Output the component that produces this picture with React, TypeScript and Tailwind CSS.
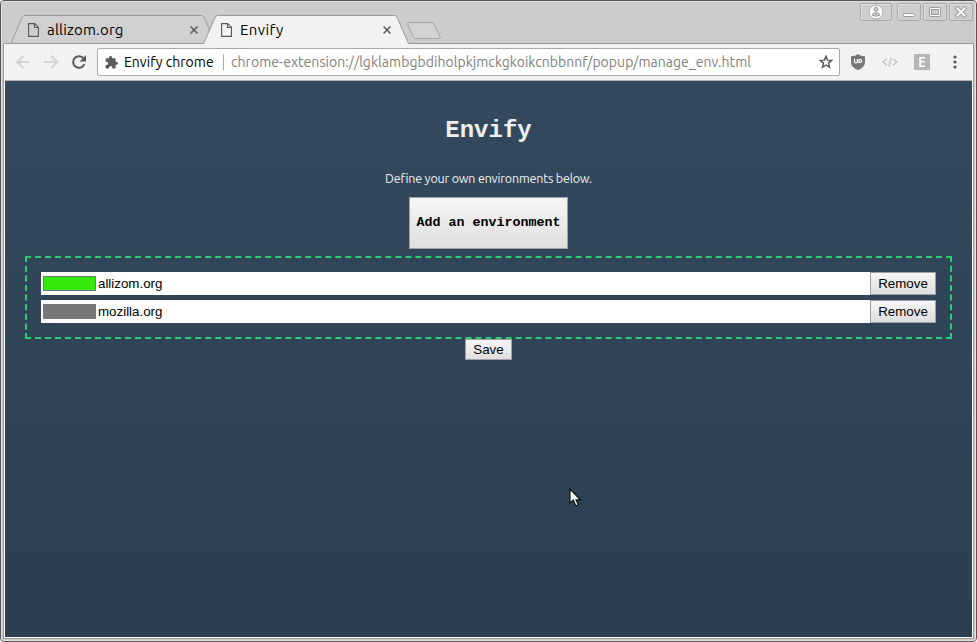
import React from "react";

const ui = "font-['Ubuntu','Noto_Sans',sans-serif]";

function PageIcon() {
  return (
    <svg width="11" height="14" viewBox="0 0 11 14" fill="none" stroke="#5a5a5a" className="shrink-0">
      <path d="M.6.6h6.1L10.4 4.3v9.1H.6zM6.5.8v3.7h3.8" strokeWidth="1.15" />
    </svg>
  );
}

function Close() {
  return (
    <svg width="8" height="8" viewBox="0 0 8 8" stroke="#5a5a5a" strokeWidth="1.5" className="shrink-0">
      <path d="M.5.5l7 7M7.5.5l-7 7" />
    </svg>
  );
}

function Tab({ title, className, titleClass }: { title: string; className: string; titleClass: string }) {
  return (
    <div className={`relative flex h-7 items-center ${className}`}>
      <PageIcon />
      <span className={`ml-2 flex-1 whitespace-nowrap text-[15px] leading-7 text-black ${titleClass}`}>{title}</span>
      <Close />
    </div>
  );
}

function TabStrip() {
  return (
    <div className="relative flex h-[42px] items-start">
      <svg className="absolute left-[-2px] top-[-2px]" width="976" height="44" viewBox="0 0 976 44" fill="none">
        <path d="M4 43.5H11L22.2 17.2Q23 15.5 25 15.5H201.5Q203.3 15.5 204 17.2L215.5 43.5" fill="#d0d0d0" stroke="#999" />
        <path d="M203.5 44L215.2 17.2Q216 15.5 218 15.5H394.5Q396.3 15.5 397 17.2L408.5 44Z" fill="#f2f2f2" />
        <path d="M4 43.5H203.7L215.2 17.2Q216 15.5 218 15.5H394.5Q396.3 15.5 397 17.2L408.5 43.5H973" stroke="#999" />
        <path d="M409 22.5H431Q433 22.5 433.8 24.2L440 36.5Q441.2 38.5 439 38.5H416Q414 38.5 413.2 36.8L407.8 24.5Q407 22.5 409 22.5Z" fill="#d3d3d3" stroke="#a5a5a5" />
      </svg>
      <Tab title="allizom.org" className="ml-[26px] mt-[14px] w-[170px]" titleClass="tracking-[0.2px]" />
      <Tab title="Envify" className="ml-[23px] mt-[14px] w-[170px]" titleClass="tracking-[0.4px]" />
      <div className="relative ml-auto mr-[2px] mt-[1px] flex gap-[2px]">
        <WindowButton wide>
          <circle cx="16" cy="9" r="7" fill="#fff" stroke="#aaa" />
          <circle cx="16" cy="6.3" r="2" fill="#ccc" stroke="#999" />
          <path d="M12.3 12.2C12.3 9 19.7 9 19.7 12.2Q16 14.4 12.3 12.2Z" fill="#ccc" stroke="#999" />
        </WindowButton>
        <WindowButton><rect x="6.5" y="10.5" width="11" height="3" rx="1" fill="#fff" stroke="#999" /></WindowButton>
        <WindowButton>
          <rect x="6.5" y="4.5" width="11" height="9" rx="1.5" fill="#fff" stroke="#999" />
          <rect x="8.5" y="6.5" width="7" height="5" fill="#ccc" stroke="#999" />
        </WindowButton>
        <WindowButton>
          <path d="M8.5 5.5l7 7M15.5 5.5l-7 7" stroke="#999" strokeWidth="4" strokeLinecap="square" />
          <path d="M8.5 5.5l7 7M15.5 5.5l-7 7" stroke="#fff" strokeWidth="2" strokeLinecap="square" />
        </WindowButton>
      </div>
    </div>
  );
}

function WindowButton({ wide, children }: { wide?: boolean; children: React.ReactNode }) {
  const w = wide ? 32 : 24;
  return (
    <svg width={w} height="18" viewBox={`0 0 ${w} 18`} fill="none" className={wide ? "mr-[3px]" : ""}>
      <rect x=".5" y=".5" width={w - 1} height="17" rx="1.5" fill="#cecece" stroke="#aaa" />
      <path d={`M1.5 16V1.5H${w - 2}`} stroke="#dedede" />
      {children}
    </svg>
  );
}

function Toolbar() {
  return (
    <div className="flex h-[37px] items-center border-b border-[#b6b6b6] bg-[#f2f2f2] pr-[9px]">
      <svg width="92" height="36" viewBox="0 0 92 36" fill="none" className="shrink-0">
        <path d="M25 18H13M18.5 11.8L12.3 18l6.2 6.2M39 18h13M46 11.8l6.2 6.2-6.2 6.2" stroke="#d2d2d2" strokeWidth="2" />
        <path d="M78.6 14.5A5.8 5.8 0 1 0 79.4 20" stroke="#5a5a5a" strokeWidth="2" />
        <path d="M81 11v6.5h-6.5z" fill="#5a5a5a" />
      </svg>
      <div className="flex h-7 w-[743px] shrink-0 items-center rounded-[2px] border border-[#a9a9a9] bg-white">
        <svg width="13" height="13" viewBox="1 1 22 22" fill="#5a5a5a" className="ml-[7px]">
          <path d="M20.5 11H19V7c0-1.1-.9-2-2-2h-4V3.5a2.5 2.5 0 0 0-5 0V5H4a2 2 0 0 0-2 2v3.8h1.5a2.7 2.7 0 0 1 0 5.4H2V20c0 1.1.9 2 2 2h3.8v-1.5a2.7 2.7 0 0 1 5.4 0V22H17a2 2 0 0 0 2-2v-4h1.5a2.5 2.5 0 0 0 0-5z" />
        </svg>
        <span className="ml-[6px] w-[99px] whitespace-nowrap text-[14px] leading-6 tracking-[0.02px] text-black">Envify chrome</span>
        <span className="h-4 w-px bg-[#aaa]" />
        <span className="ml-[7px] flex-1 whitespace-nowrap text-[14px] leading-6 tracking-[0.045px] text-[#808080]">chrome-extension://lgklambgbdiholpkjmckgkoikcnbbnnf/popup/manage_env.html</span>
        <svg width="14" height="14" viewBox="0 0 14 14" fill="none" stroke="#555" strokeWidth="1.4" className="mr-[6px]">
          <path d="M7 1.3L8.5 5.1l4.3.3-3.3 2.7 1.1 4.2L7 10l-3.6 2.3 1.1-4.2L1.2 5.4l4.3-.3z" />
        </svg>
      </div>
      <svg width="14" height="16" viewBox="0 0 14 16" className="ml-[11px]">
        <path d="M7 0C9 1.5 11 2.2 14 2.2V8c0 4-3 6.5-7 8-4-1.5-7-4-7-8V2.2C3 2.2 5 1.5 7 0z" fill="#777" />
        <path d="M3.5 5v2.5q0 1.5 1.4 1.5t1.4-1.5V5M8 5.6v2.8h1.3q1.4 0 1.4-1.4T9.3 5.6z" fill="none" stroke="#fff" strokeWidth="1.2" />
      </svg>
      <svg width="16" height="10" viewBox="0 0 16 10" fill="none" stroke="#c1c1c1" strokeWidth="1.3" className="ml-[17px]">
        <path d="M5 1.5L1.2 5 5 8.5M11 1.5L14.8 5 11 8.5M9.2.5L6.8 9.5" />
      </svg>
      <div className="ml-4 flex size-4 items-center justify-center rounded-[1px] bg-[#b5b5b5] font-['Open_Sans',sans-serif] text-[14px] font-semibold leading-4 text-white">E</div>
      <svg width="4" height="14" viewBox="0 0 4 14" fill="#5a5a5a" className="ml-auto mr-[6px]">
        <circle cx="2" cy="2" r="1.6" /><circle cx="2" cy="7" r="1.6" /><circle cx="2" cy="12" r="1.6" />
      </svg>
    </div>
  );
}

function Environment({ name, swatch }: { name: string; swatch: string }) {
  return (
    <div className="flex h-[23px] items-center bg-white">
      <span className={`ml-[2px] h-[15px] w-[53px] border border-[#777] ${swatch}`} />
      <span className="ml-[2px] flex-1 text-[13.33px] leading-[23px] text-black">{name}</span>
      <button className="h-[23px] w-[66px] border border-[#a0a0a0] bg-linear-to-b from-[#f6f6f6] to-[#dedede] text-[13.33px] leading-[20px] text-black">Remove</button>
    </div>
  );
}

function Cursor() {
  return (
    <svg width="13" height="20" viewBox="0 0 13 20" className="absolute left-[564px] top-[407px]">
      <path d="M1 1v14l3.3-3 2.4 5.5q1.5.5 2.4-1L7 11.8h4.3z" fill="#fff" stroke="#111" strokeWidth="1.2" />
    </svg>
  );
}

export default function App() {
  return (
    <div className={`h-[642px] w-[977px] overflow-hidden bg-white ${ui}`}>
      <div className="h-full rounded-[4px] border border-[#555] bg-[#ccc]">
        <div className="flex h-full flex-col rounded-[3px] border border-[#e0e0e0] bg-[#ccc]">
          <TabStrip />
          <div className="mx-px mb-px flex flex-1 flex-col border-x border-b border-[#999]">
            <div className="flex flex-1 flex-col border-b border-x border-white bg-[#f2f2f2]">
              <Toolbar />
              <main className="relative flex flex-1 flex-col items-center bg-linear-to-b from-[#34495e] to-[#2c3e50] font-['Liberation_Sans',Arial,sans-serif]">
                <h1 className="mt-[36px] font-['Liberation_Mono',monospace] text-[24px] font-bold leading-[28px] text-[#ecf0f1]">Envify</h1>
                <p className={`mt-[24px] whitespace-nowrap text-[12.5px] leading-[18px] tracking-[-0.19px] text-[#ecf0f1] ${ui}`}>Define your own environments below.</p>
                <button className="mt-[10px] h-[52px] w-[159px] border border-[#a0a0a0] bg-linear-to-b from-[#f6f6f6] to-[#dedede] font-['Liberation_Mono',monospace] text-[13.33px] font-bold text-black">Add an environment</button>
                <div className="mt-[7px] flex h-[83px] w-[927px] flex-col gap-[5px] border-2 border-dashed border-[#2ecc71] px-[14px] py-[14px]">
                  <Environment name="allizom.org" swatch="bg-[#33e80c]" />
                  <Environment name="mozilla.org" swatch="bg-[#777]" />
                </div>
                <button className="h-[21px] w-[47px] border border-[#a0a0a0] bg-linear-to-b from-[#f6f6f6] to-[#dedede] text-[13.33px] leading-[19px] text-black">Save</button>
                <Cursor />
              </main>
            </div>
          </div>
        </div>
      </div>
    </div>
  );
}
